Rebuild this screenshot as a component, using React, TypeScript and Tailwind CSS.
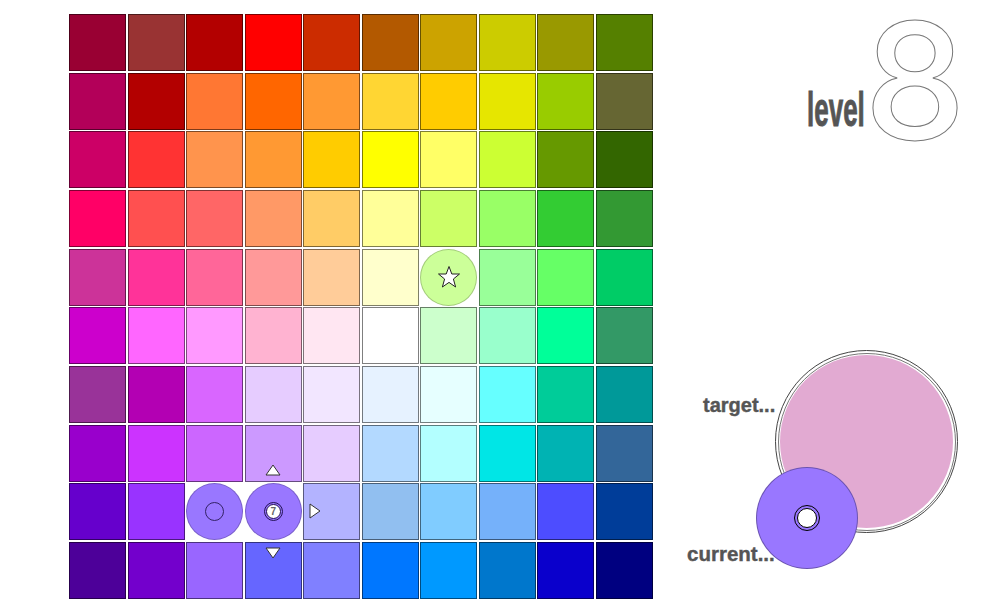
import React from 'react';

const rows: string[][] = [
  ['#990033', '#993333', '#b30000', '#ff0000', '#cc2c00', '#b35900', '#cca300', '#cccc00', '#999900', '#558000'],
  ['#b30059', '#b30000', '#ff7733', '#ff6600', '#ff9933', '#ffd633', '#ffcc00', '#e6e600', '#99cc00', '#666633'],
  ['#cc0066', '#ff3333', '#ff944d', '#ff9933', '#ffcc00', '#ffff00', '#ffff66', '#ccff33', '#669900', '#336600'],
  ['#ff0066', '#ff5050', '#ff6666', '#ff9966', '#ffcc66', '#ffff99', '#ccff66', '#99ff66', '#33cc33', '#339933'],
  ['#cc3399', '#ff3399', '#ff6699', '#ff9999', '#ffcc99', '#ffffcc', 'star', '#99ff99', '#66ff66', '#00cc66'],
  ['#cc00cc', '#ff66ff', '#ff99ff', '#ffb3d1', '#ffe6f2', '#ffffff', '#ccffcc', '#99ffcc', '#00ff99', '#339966'],
  ['#993399', '#b300b3', '#d966ff', '#e6ccff', '#f2e6ff', '#e6f2ff', '#e6ffff', '#66ffff', '#00cc99', '#009999'],
  ['#9900cc', '#cc33ff', '#cc66ff', '#cc99ff', '#e6ccff', '#b3d9ff', '#b3ffff', '#00e6e6', '#00b3b3', '#336699'],
  ['#6600cc', '#9933ff', 'ring', 'player', '#b3b3ff', '#91bff0', '#80ccff', '#75b1fa', '#4d4dff', '#003d99'],
  ['#4d0099', '#7300cc', '#9966ff', '#6666ff', '#8080ff', '#0077ff', '#0099ff', '#0077cc', '#0a00cc', '#000080'],
];

const Arrow = ({ points, className }: { points: string; className: string }) => (
  <svg viewBox="0 0 16 16" className={`absolute w-[16px] h-[16px] ${className}`}>
    <polygon points={points} fill="#fff" stroke="#333" strokeWidth="1" />
  </svg>
);

const Cell = ({ value }: { value: string }) => {
  if (value === 'star') {
    return (
      <div className="flex items-center justify-center">
        <div className="w-[57px] h-[57px] rounded-full bg-[#ccff99] border border-black/20 flex items-center justify-center">
          <svg viewBox="0 0 24 24" className="w-[24px] h-[24px]">
            <polygon points="12,1.5 14.8,9 22.5,9 16.4,14 18.6,22 12,17.4 5.4,22 7.6,14 1.5,9 9.2,9" fill="#fff" stroke="#222" strokeWidth="1" />
          </svg>
        </div>
      </div>
    );
  }
  if (value === 'ring') {
    return (
      <div className="flex items-center justify-center">
        <div className="w-[57px] h-[57px] rounded-full bg-[#9977ff] border border-black/20 flex items-center justify-center">
          <div className="w-[19px] h-[19px] rounded-full border border-[#332266]" />
        </div>
      </div>
    );
  }
  if (value === 'player') {
    return (
      <div className="relative flex items-center justify-center">
        <div className="w-[57px] h-[57px] rounded-full bg-[#9977ff] border border-black/20 flex items-center justify-center">
          <div className="w-[19px] h-[19px] rounded-full border border-[#221155] bg-[#9977ff] flex items-center justify-center">
            <div className="w-[15px] h-[15px] rounded-full bg-white border border-[#221155] flex items-center justify-center text-[10px] leading-none font-bold text-[#666] font-['Liberation_Sans',sans-serif]">
              7
            </div>
          </div>
        </div>
        <Arrow points="8,3 15,13 1,13" className="top-[-21px] left-[20px]" />
        <Arrow points="1,3 15,3 8,13" className="bottom-[-21px] left-[20px]" />
        <Arrow points="3,1 13,8 3,15" className="right-[-21px] top-[20px]" />
      </div>
    );
  }
  return <div className="border border-black/50" style={{ backgroundColor: value }} />;
};

export default function App() {
  return (
    <div className="w-[1000px] h-[612px] bg-white overflow-hidden flex pl-[69px] pt-[14px]">
      <div className="grid grid-cols-10 grid-rows-10 gap-[1.5px] w-[584px] h-[585px] shrink-0">
        {rows.flat().map((value, i) => (
          <Cell key={i} value={value} />
        ))}
      </div>

      <div className="flex-1 flex flex-col">
        <div className="flex justify-end items-start pr-[34px] h-[300px]">
          <div className="mt-[72px] mr-[-1px] text-[48px] leading-none font-bold text-[#555] scale-x-[0.54] origin-right [-webkit-text-stroke:1px_#555] font-['Liberation_Sans',sans-serif]">
            level
          </div>
          <div className="mt-[4px] text-[162px] leading-[124px] font-medium text-white [-webkit-text-stroke:1px_#777] font-['Inter',sans-serif]">
            8
          </div>
        </div>

        <div className="relative mt-[36px] ml-[122px] w-[183px] h-[183px] rounded-full border border-[#444] flex items-center justify-center">
          <div className="w-[178px] h-[178px] rounded-full border border-[#777] flex items-center justify-center">
            <div className="w-[173px] h-[173px] rounded-full bg-[#e2aad2]" />
          </div>
          <span className="absolute left-[-73px] top-[44px] text-[20px] leading-none font-bold text-[#555] [-webkit-text-stroke:0.4px_#555] font-['Liberation_Sans',sans-serif]">
            target...
          </span>
          <div className="absolute left-[-20px] top-[116px] w-[102px] h-[102px] rounded-full bg-[#9977ff] border border-black/30 flex items-center justify-center">
            <div className="w-[26px] h-[26px] rounded-full border border-black bg-[#9977ff] flex items-center justify-center">
              <div className="w-[20px] h-[20px] rounded-full bg-white border border-black" />
            </div>
          </div>
          <span className="absolute left-[-89px] top-[193px] text-[20.5px] leading-none font-bold text-[#555] [-webkit-text-stroke:0.4px_#555] font-['Liberation_Sans',sans-serif]">
            current...
          </span>
        </div>
      </div>
    </div>
  );
}
